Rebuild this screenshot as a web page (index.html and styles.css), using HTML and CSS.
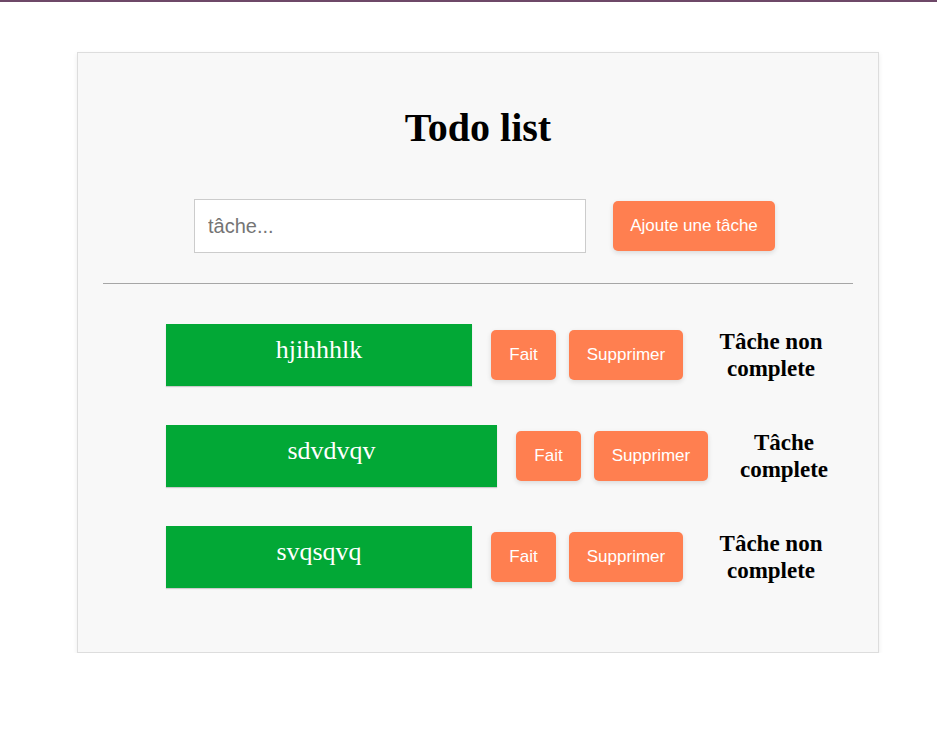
FILE: index.html
```html
<!DOCTYPE html>
<html lang="fr">
<head>
<meta charset="utf-8">
<title>Todo list</title>
<link rel="stylesheet" href="styles.css">
</head>
<body>
<div class="topbar"></div>
<div class="card">
  <h1 class="title">Todo list</h1>
  <form class="add-form">
    <input class="task-input" type="text" placeholder="tâche...">
    <button class="btn btn-add" type="button">Ajoute une tâche</button>
  </form>
  <hr class="sep">
  <ul class="tasks">
    <li class="task">
      <p class="task-text">hjihhhlk</p>
      <button class="btn btn-done" type="button">Fait</button>
      <button class="btn btn-del" type="button">Supprimer</button>
      <h3 class="status">Tâche non complete</h3>
    </li>
    <li class="task task-complete">
      <p class="task-text">sdvdvqv</p>
      <button class="btn btn-done" type="button">Fait</button>
      <button class="btn btn-del" type="button">Supprimer</button>
      <h3 class="status">Tâche complete</h3>
    </li>
    <li class="task">
      <p class="task-text">svqsqvq</p>
      <button class="btn btn-done" type="button">Fait</button>
      <button class="btn btn-del" type="button">Supprimer</button>
      <h3 class="status">Tâche non complete</h3>
    </li>
  </ul>
</div>
</body>
</html>
```

FILE: styles.css
```css
* { box-sizing: border-box; }

body {
  margin: 0;
  background: #ffffff;
  font-family: "Liberation Serif", "Times New Roman", serif;
}

.topbar {
  height: 2px;
  background: #6e4868;
}

.card {
  width: 802px;
  margin: 50px 0 0 77px;
  padding: 25px 25px 25px 25px;
  background: #f8f8f8;
  border: 1px solid #dddddd;
  box-shadow: 0 2px 5px rgba(0, 0, 0, 0.08);
}

.title {
  margin: 27px 0 0;
  font-size: 40px;
  line-height: 46px;
  font-weight: bold;
  text-align: center;
  color: #000;
}

.add-form {
  display: flex;
  align-items: center;
  gap: 27px;
  margin: 48px 0 0;
  padding-left: 91px;
}

.task-input {
  width: 392px;
  height: 54px;
  margin: 0;
  padding: 0 13px;
  border: 1px solid #cccccc;
  background: #fff;
  font-family: "Liberation Sans", Arial, sans-serif;
  font-size: 20px;
  color: #333;
  outline: none;
}

.task-input::placeholder { color: #757575; }

.btn {
  height: 50px;
  margin: 0;
  padding: 0 20px;
  border: none;
  border-radius: 5px;
  background: #ff7f50;
  color: #ffffff;
  font-family: "Liberation Sans", Arial, sans-serif;
  font-size: 17px;
  box-shadow: 0 2px 5px rgba(0, 0, 0, 0.12);
  cursor: pointer;
}

.btn-add { width: 162px; padding: 0; }

.sep {
  margin: 30px 0 0;
  height: 0;
  border: none;
  border-top: 1px solid #a6a6a6;
}

.tasks {
  list-style: none;
  margin: 40px 0 39px;
  padding: 0 0 0 63px;
  display: flex;
  flex-direction: column;
  gap: 39px;
}

.task {
  display: flex;
  align-items: center;
  height: 62px;
}

.task-text {
  width: 306px;
  height: 62px;
  margin: 0;
  padding-top: 11px;
  background: #02a836;
  color: #ffffff;
  font-size: 26px;
  line-height: 30px;
  text-align: center;
  box-shadow: 0 1px 1px rgba(0, 0, 0, 0.18);
}

.btn-done { width: 65px; padding: 0; margin-left: 19px; }
.btn-del { width: 114px; padding: 0; margin-left: 13px; }

.status {
  width: 120px;
  margin: 0 0 0 28px;
  font-size: 23px;
  line-height: 27px;
  font-weight: bold;
  text-align: center;
  color: #000;
}

.task-complete .task-text { width: 331px; }
.task-complete .status { margin-left: 16px; }
```
